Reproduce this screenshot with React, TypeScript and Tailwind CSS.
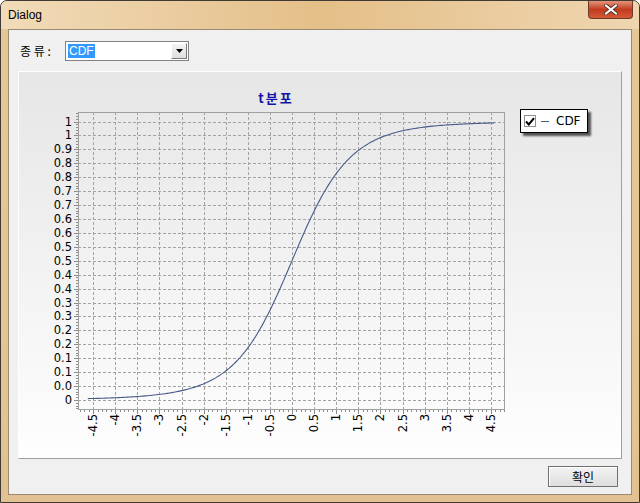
import React from "react";

const xs = (v: number) => 273 + 44.2 * v;
const ys = (v: number) => 328 - 278.5 * v;

function cdf(t: number) {
  const x = t / Math.sqrt(t * t + 4);
  return 0.5 + 0.75 * x * (1 - (x * x) / 3);
}

const yLabels = ["1", "1", "0.9", "0.8", "0.8", "0.7", "0.7", "0.6", "0.6", "0.5", "0.5", "0.4", "0.4", "0.3", "0.3", "0.2", "0.2", "0.1", "0.1", "0.0", "0"];
const xLabels = ["-4.5", "-4", "-3.5", "-3", "-2.5", "-2", "-1.5", "-1", "-0.5", "0", "0.5", "1", "1.5", "2", "2.5", "3", "3.5", "4", "4.5"];

function Chart() {
  const L = 59, T = 40, R = 485, B = 337;
  const r = (n: number) => Math.round(n) + 0.5;
  const pts: string[] = [];
  for (let v = -4.62; v <= 4.58; v += 0.05) {
    pts.push(`${xs(v).toFixed(2)},${ys(cdf(v)).toFixed(2)}`);
  }
  const xMinor: number[] = [];
  for (let i = -48; i <= 48; i++) xMinor.push(i);
  const yMinor: number[] = [];
  for (let i = -3; i <= 103; i++) yMinor.push(i);
  const font = "'DejaVu Sans', sans-serif";
  return (
    <svg width={501} height={386} className="block shrink-0">
      <text x={257} y={31} textAnchor="middle" fontFamily="'Noto Sans CJK KR', sans-serif" fontWeight="bold" fontSize={13} letterSpacing={2} fill="#1414a8">t분포</text>
      <g stroke="#a3a3a3" strokeDasharray="3 2" shapeRendering="crispEdges">
        {xLabels.map((_, i) => {
          const x = r(xs(-4.5 + i * 0.5));
          return <line key={"gx" + i} x1={x} x2={x} y1={T} y2={B} />;
        })}
        {yLabels.map((_, i) => {
          const y = r(ys((20 - i) * 0.05));
          return <line key={"gy" + i} x1={L} x2={R} y1={y} y2={y} />;
        })}
      </g>
      <rect x={L + 0.5} y={T + 0.5} width={R - L} height={B - T} fill="none" stroke="#a0a0a0" shapeRendering="crispEdges" />
      <g stroke="#8c8c8c" shapeRendering="crispEdges">
        {xMinor.map((i) => {
          const x = r(xs(i / 10));
          const major = i % 5 === 0;
          return <line key={"tx" + i} x1={x} x2={x} y1={B + 1} y2={B + (major ? 5 : 3)} />;
        })}
        {yMinor.map((i) => {
          const y = r(ys(i / 100));
          if (y < T || y > B + 1) return null;
          const major = i % 5 === 0;
          return <line key={"ty" + i} x1={L - (major ? 4 : 2)} x2={L} y1={y} y2={y} />;
        })}
      </g>
      <polyline points={pts.join(" ")} fill="none" stroke="#475b88" strokeWidth={1.1} />
      <g fontFamily={font} fontSize={11.5} fill="#000">
        {yLabels.map((l, i) => (
          <text key={"ly" + i} x={53} y={ys((20 - i) * 0.05) + 4} textAnchor="end">{l}</text>
        ))}
        {xLabels.map((l, i) => {
          const x = xs(-4.5 + i * 0.5) + 4;
          return (
            <text key={"lx" + i} transform={`translate(${x},342) rotate(-90)`} textAnchor="end">{l}</text>
          );
        })}
      </g>
    </svg>
  );
}

export default function App() {
  return (
    <div className="w-[640px] h-[503px] overflow-hidden bg-white">
      <div className="w-[640px] h-[503px] flex flex-col border border-[#3f3a33] rounded-t-[7px] bg-[#e4c596] bg-linear-to-b from-[#e6c898] to-[#e2c292]">
        {/* title bar */}
        <div className="h-[28px] flex items-start justify-between bg-linear-to-r from-[#f1dbb9] via-[#e4bf88] to-[#efd6b0] rounded-t-[6px]">
          <span className="pl-[7px] pt-[7px] text-[12px] leading-[14px] text-black" style={{ fontFamily: "'Liberation Sans', 'Noto Sans', sans-serif" }}>Dialog</span>
          <div className="mr-[6px] w-[45px] h-[18px] rounded-b-[4px] border border-t-0 border-[#6e3a2a] bg-linear-to-b from-[#e39378] via-[#c23a1f] to-[#d45a36] flex items-center justify-center">
            <svg width="14" height="11" viewBox="0 0 14 11">
              <path d="M2 1.5 L12 9.5 M12 1.5 L2 9.5" stroke="#4a2a20" strokeWidth="3.6" strokeLinecap="square" />
              <path d="M2 1.5 L12 9.5 M12 1.5 L2 9.5" stroke="#ffffff" strokeWidth="2" strokeLinecap="square" />
            </svg>
          </div>
        </div>
        <div className="flex flex-1 px-[7px] pb-[7px]">
          {/* client */}
          <div className="w-[624px] h-[466px] border border-[#9b8a72] bg-[#f0f0f0] flex flex-col px-[9px] pt-[11px]" style={{ fontFamily: "'Noto Sans CJK KR', sans-serif" }}>
            <div className="h-[20px] flex items-center">
              <span className="w-[47px] pl-[2px] text-[12px] leading-none text-black whitespace-pre">종 류 :</span>
              <div className="w-[124px] h-[20px] border border-[#828282] bg-white flex items-center p-[1px]">
                <div className="flex-1 h-full flex items-center pl-[1px]">
                  <span className="bg-[#3399ff] text-white text-[12px] leading-[14px] px-[1px]" style={{ fontFamily: "'Liberation Sans', sans-serif" }}>CDF</span>
                </div>
                <div className="w-[16px] h-[16px] bg-linear-to-b from-[#f4f4f4] to-[#dedede] border border-t-white border-l-white border-r-[#7a7a7a] border-b-[#7a7a7a] flex items-center justify-center">
                  <svg width="7" height="4" viewBox="0 0 7 4"><path d="M0 0 H7 L3.5 4 Z" fill="#000" /></svg>
                </div>
              </div>
            </div>
            {/* chart panel */}
            <div className="mt-[10px] w-[604px] h-[388px] border border-t-white border-l-white border-r-[#a0a0a0] border-b-[#a0a0a0] bg-linear-to-b from-[#e6e6e6] to-[#fefefe] flex">
              <Chart />
              <div className="mt-[37px] w-[68px] h-[24px] border border-black bg-white shadow-[3px_3px_2px_rgba(0,0,0,0.65)] flex items-center pl-[3px]">
                <div className="w-[12px] h-[12px] border border-[#8e8f8f] bg-white flex items-center justify-center">
                  <svg width="10" height="9" viewBox="0 0 10 9"><path d="M1 4.5 L3.8 7.5 L9 1.2" fill="none" stroke="#000" strokeWidth="2" /></svg>
                </div>
                <div className="ml-[5px] w-[8px] h-[1px] bg-[#475b88]" />
                <span className="ml-[7px] text-[12px] leading-none text-black" style={{ fontFamily: "'DejaVu Sans', sans-serif" }}>CDF</span>
              </div>
            </div>
            <div className="mt-[7px] flex justify-end pr-[4px]">
              <button className="w-[70px] h-[21px] border border-[#707070] shadow-[inset_1px_1px_0_#fff] bg-linear-to-b from-[#f3f3f3] to-[#dedede] text-[12px] leading-none text-black flex items-center justify-center">확인</button>
            </div>
          </div>
        </div>
      </div>
    </div>
  );
}
